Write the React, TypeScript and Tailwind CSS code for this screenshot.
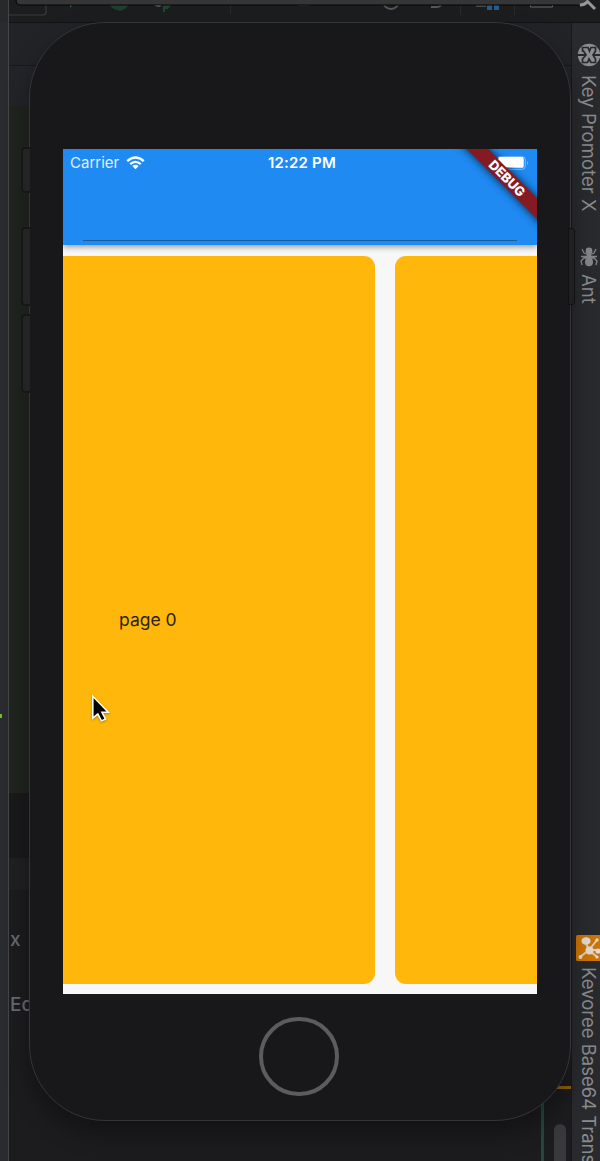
import React from "react";

function TopToolbar() {
  return (
    <svg className="block h-[23px] w-full" viewBox="0 0 600 23" fill="none">
      <rect width="600" height="23" fill="#1c1d1f" />
      <path d="M9 15h34q3 0 3-3V5" stroke="#3a3b3d" strokeWidth="1.2" />
      <path d="M70 5h3l-3 3z" fill="#2b5a3c" />
      <path d="M109 5h20l-4 4-5 2-6-2z" fill="#1f3f2f" />
      <path d="M154 5h8q-3 3.500-8 0z" fill="#77797b" />
      <path d="M163 5h8l-3 4h-3v3h-2z" fill="#23442f" />
      <path d="M230.500 5v9M460.500 5v10M514.500 5v10" stroke="#2a2b2d" />
      <path d="M298 5.500h11" stroke="#1c3c5a" />
      <circle cx="391" cy="1" r="8" stroke="#55575a" strokeWidth="2" />
      <path d="M431 7h5q5 0 6-4" stroke="#55575a" strokeWidth="2" />
      <path d="M476 6h10" stroke="#55575a" strokeWidth="1.500" />
      <path d="M487 5h5v5h-5zM494 5h5v5h-5z" fill="#245c8b" />
      <path d="M530.500 0v7h22V0" stroke="#67696b" />
      <path d="M16 0h572v1q-3 4-7 4H20q-4-1-4-5z" fill="#363636" />
      <path d="M16 0q0 5 5 5h558" stroke="#050505" />
      <path d="M580 5q5 0 8-4M587 1l8 8" stroke="#97989a" strokeWidth="3" />
      <path d="M0 22.500h600" stroke="#111214" />
      <rect width="8" height="23" fill="#29292c" />
      <path d="M8.500 0v23" stroke="#444547" />
    </svg>
  );
}

function KeyIcon() {
  return (
    <svg className="h-[24px] w-[24px] shrink-0" viewBox="0 0 24 24">
      <circle cx="12" cy="12" r="11.200" fill="#8c8d8f" />
      <path d="M0 12h24" stroke="#27282b" strokeWidth="2" />
      <path d="M5.500 4.500h5.500l1.500 3.500 1.500-3.500h4.500v3.500L16 12l2.500 4v3.500H14L12 16l-1.500 3.500h-5V16L9 12 6.500 8h-1z" fill="#8c8d8f" stroke="#27282b" strokeWidth="1.700" />
    </svg>
  );
}

function AntIcon() {
  return (
    <svg className="h-[20px] w-[18px] shrink-0" viewBox="0 0 18 20">
      <g stroke="#858688" strokeWidth="1.300" fill="none">
        <path d="M9 8L4 6 2 2M9 8l5-2 2-4M9 9.500H1M9 9.500h8M9 11l-5 0-3 3 1 4M9 11h5l3 3-1 4" />
      </g>
      <g fill="#858688">
        <circle cx="9" cy="4" r="3.400" />
        <circle cx="9" cy="9" r="2.400" />
        <ellipse cx="9" cy="15" rx="4" ry="4.200" />
      </g>
    </svg>
  );
}

function KevoreeIcon() {
  return (
    <svg className="h-[26px] w-[26px] shrink-0" viewBox="0 0 26 26">
      <rect width="26" height="26" rx="1.500" fill="#cd7404" />
      <path d="M4 22l9-7 8-10M9 6l4 9h9M13 15l8 7" stroke="#dfcbb5" strokeWidth="2" fill="none" />
      <g fill="#e3d9d0">
        <ellipse cx="10" cy="6" rx="4.600" ry="3.800" />
        <circle cx="13.500" cy="15.500" r="4" />
        <circle cx="21" cy="5" r="1.700" />
        <circle cx="22" cy="16" r="2.600" />
        <circle cx="4.500" cy="22" r="2" />
        <circle cx="21" cy="22" r="1.600" />
      </g>
    </svg>
  );
}

function StatusBar() {
  return (
    <div className="grid h-[27px] grid-cols-3 items-center px-[7px] text-[15px] leading-[27px] text-white">
      <div className="flex items-center gap-[7px]">
        <span className="text-[15px] text-[#e2effc]">Carrier</span>
        <svg className="h-[14px] w-[19px]" viewBox="0 0 19 14" fill="none">
          <path d="M1.200 5.200Q9.500-2.300 17.800 5.200M4.200 8.200q5.300-4.600 10.600 0" stroke="white" strokeWidth="2.300" />
          <path d="M6.300 10.100q3.200-2.500 6.400 0L9.500 13.200z" fill="white" />
        </svg>
      </div>
      <span className="translate-x-[2px] whitespace-nowrap text-center font-semibold tracking-[0.2px]">12:22 PM</span>
      <svg className="h-[14px] w-[34px] justify-self-end" viewBox="0 0 34 14">
        <rect x="0.700" y="0.700" width="28.600" height="12.600" rx="3" fill="none" stroke="#83bdf6" />
        <rect x="2.500" y="2.200" width="25" height="9.600" rx="1" fill="white" />
        <path d="M31 5q2 2 0 4z" fill="#83bdf6" />
      </svg>
    </div>
  );
}

function PhoneScreen() {
  return (
    <div className="relative flex h-[845px] w-[474px] flex-col overflow-hidden bg-[#f8f7f8]">
      <header className="z-10 flex h-[96px] shrink-0 flex-col justify-between bg-[#1f8af2] shadow-[0_2px_6px_rgba(0,0,0,0.38)]">
        <StatusBar />
        <div className="mx-5 mb-[4px] h-[1.500px] bg-[#195a98]" />
      </header>
      <main className="flex min-h-0 flex-1 gap-5 pt-[10.500px] pb-[10.500px]">
        <section className="flex w-[312px] shrink-0 items-center rounded-r-[11px] bg-[#feb70a] pt-[2px] pl-[56px] text-[17.500px] text-[#2c230c]">
          page 0
        </section>
        <section className="flex-1 rounded-l-[11px] bg-[#feb70a]" />
      </main>
      <div className="absolute top-0 right-0 z-20 h-[96px] w-[96px] overflow-hidden">
        <div className="absolute top-[22px] -right-[35px] flex h-[15px] w-[130px] rotate-45 items-center justify-center bg-[#861a22] text-[13px] font-extrabold text-white shadow-[0_0_8px_rgba(0,0,0,0.8)]">
          DEBUG
        </div>
      </div>
      <svg className="absolute top-[6px] right-[7px] z-20 h-[14px] w-[34px]" viewBox="0 0 34 14">
        <path d="M2.500 3q0-1 1-1h23q1 0 1 1v8q0 1-1 1H10L2.500 4.500z" fill="white" />
      </svg>
      <svg className="absolute top-[544px] left-[28px] h-[33px] w-[20px] drop-shadow-[0_1px_1px_rgba(0,0,0,0.3)]" viewBox="0 0 22 35">
        <path d="M2 3v24l5.500-4.500 4 7.500 4.500-2-4-7.500h7z" fill="black" stroke="white" strokeWidth="1.700" />
      </svg>
    </div>
  );
}

function Phone() {
  return (
    <div className="absolute top-[22px] left-[29px] flex h-[1099px] w-[542px] flex-col items-center rounded-[76px] border border-[#353537] bg-[#18171a] pt-[126px] shadow-[0_12px_24px_rgba(0,0,0,0.35)]">
      <div className="absolute top-[124px] -left-[9px] h-[46px] w-[9px] rounded-l-[4px] border-2 border-r-0 border-[#151716] bg-[#242426]" />
      <div className="absolute top-[204px] -left-[9px] h-[79px] w-[9px] rounded-l-[4px] border-2 border-r-0 border-[#151716] bg-[#242426]" />
      <div className="absolute top-[291px] -left-[9px] h-[79px] w-[9px] rounded-l-[4px] border-2 border-r-0 border-[#151716] bg-[#242426]" />
      <div className="absolute top-[205px] -right-[5px] h-[77px] w-[7px] rounded-r-[3px] border border-[#101113] bg-[#202023]" />
      <PhoneScreen />
      <div className="mt-[23px] mr-[2px] h-[79px] w-[80px] rounded-full border-[4px] border-[#5c5b5d]" />
    </div>
  );
}

export default function App() {
  return (
    <div className="relative flex h-[1161px] w-[600px] flex-col overflow-hidden bg-[#1b1b1d] font-['Inter','Liberation_Sans',sans-serif]">
      <TopToolbar />
      <div className="flex min-h-0 flex-1">
        <div className="flex w-[9px] shrink-0 items-start border-r border-[#444547] bg-[#2a2b2e] pt-[691px]">
          <div className="h-[4px] w-[2px] bg-[#62c42d]" />
        </div>
        <div className="flex min-w-0 flex-1 flex-col">
          <div className="h-[43px] border-b border-[#18191c] bg-[#212327]" />
          <div className="h-[40px] bg-[#222429]" />
          <div className="h-[687px] bg-[#20241f]" />
          <div className="h-[65px] bg-[#1a191b]" />
          <div className="h-[32px] bg-[#202022]" />
          <div className="flex flex-1 justify-between bg-[#1c1c1e]">
            <div className="pt-[40px] pl-[1px] text-[19px] leading-[20px] font-medium text-[#666a70]">
              <div>x</div>
              <div className="mt-[45px]">Ed</div>
            </div>
            <div className="flex w-[32px] flex-col pt-[196px]">
              <div className="ml-[18px] h-[3px] w-[14px] bg-[#8f6208]" />
              <div className="flex flex-1 items-stretch">
                <div className="ml-[2px] w-[3px] bg-[#24483a]" />
                <div className="mt-[35px] ml-[10px] w-[12px] rounded-t-full bg-[#39393b]" />
              </div>
            </div>
          </div>
        </div>
        <aside className="flex w-[29px] shrink-0 flex-col items-start overflow-hidden border-l border-[#17181a] bg-[#292a2d] pt-[20px] pl-[5px] text-[18.500px] leading-[22px] text-[#8a8b8d]">
          <KeyIcon />
          <div className="mt-[8px] ml-px h-[138px] whitespace-nowrap tracking-[0.050px] [writing-mode:vertical-rl]">Key Promoter X</div>
          <div className="mt-[35px] ml-[3px]"><AntIcon /></div>
          <div className="mt-[7px] ml-px h-[32px] whitespace-nowrap [writing-mode:vertical-rl]">Ant</div>
          <div className="mt-[632px] -ml-px"><KevoreeIcon /></div>
          <div className="mt-[6px] ml-px whitespace-nowrap [writing-mode:vertical-rl]">Kevoree Base64 Trans</div>
        </aside>
      </div>
      <Phone />
    </div>
  );
}
